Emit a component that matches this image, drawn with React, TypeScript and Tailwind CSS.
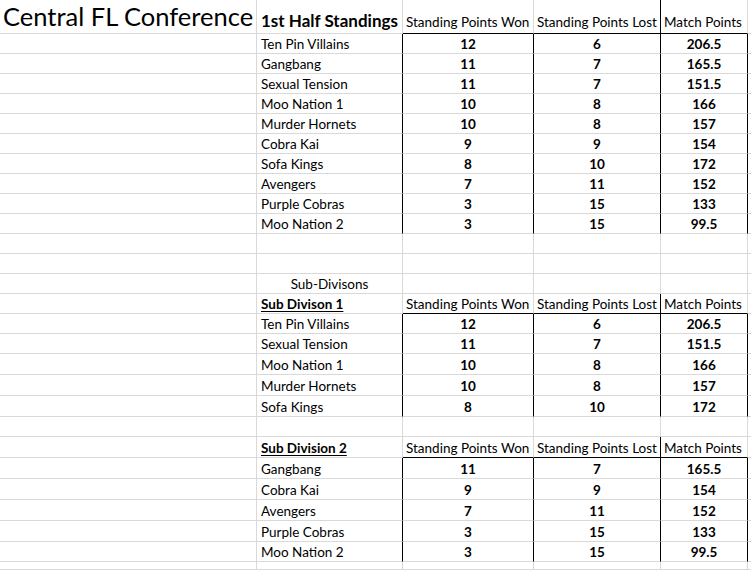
import React from "react";

type Kind = "title" | "header" | "data" | "empty" | "label";

interface RowDef {
  h: number;
  kind: Kind;
  a?: React.ReactNode;
  b?: React.ReactNode;
  c?: React.ReactNode;
  d?: React.ReactNode;
  e?: React.ReactNode;
}

const G = "border-[#d9d9d9]";

function data(name: string, w: string, l: string, m: string, h = 20): RowDef {
  return { h, kind: "data", b: name, c: w, d: l, e: m };
}

const empty = (h = 20): RowDef => ({ h, kind: "empty" });

const hdr = (title: React.ReactNode, h = 20): RowDef => ({
  h,
  kind: "header",
  b: title,
  c: "Standing Points Won",
  d: "Standing Points Lost",
  e: "Match Points",
});

const rows: RowDef[] = [
  {
    h: 34,
    kind: "title",
    a: "Central FL Conference",
    b: "1st Half Standings",
    c: "Standing Points Won",
    d: "Standing Points Lost",
    e: "Match Points",
  },
  data("Ten Pin Villains", "12", "6", "206.5"),
  data("Gangbang", "11", "7", "165.5"),
  data("Sexual Tension", "11", "7", "151.5"),
  data("Moo Nation 1", "10", "8", "166"),
  data("Murder Hornets", "10", "8", "157"),
  data("Cobra Kai", "9", "9", "154"),
  data("Sofa Kings", "8", "10", "172"),
  data("Avengers", "7", "11", "152"),
  data("Purple Cobras", "3", "15", "133"),
  data("Moo Nation 2", "3", "15", "99.5"),
  empty(),
  empty(),
  { h: 20, kind: "label", b: "Sub-Divisons" },
  hdr(<span className="font-bold underline underline-offset-2">Sub Divison 1</span>),
  data("Ten Pin Villains", "12", "6", "206.5", 20),
  data("Sexual Tension", "11", "7", "151.5", 20),
  data("Moo Nation 1", "10", "8", "166", 21),
  data("Murder Hornets", "10", "8", "157", 21),
  data("Sofa Kings", "8", "10", "172", 21),
  empty(20),
  hdr(<span className="font-bold underline underline-offset-2">Sub Division 2</span>, 21),
  data("Gangbang", "11", "7", "165.5", 21),
  data("Cobra Kai", "9", "9", "154", 21),
  data("Avengers", "7", "11", "152", 21),
  data("Purple Cobras", "3", "15", "133", 21),
  data("Moo Nation 2", "3", "15", "99.5", 20),
  empty(8),
];

function Row({ r }: { r: RowDef }) {
  const isData = r.kind === "data";
  const isHead = r.kind === "header" || r.kind === "title";
  const align = r.kind === "title" ? "items-end pb-[4px]" : "items-center pt-[3px]";

  const base = `flex ${align} border-r border-b overflow-hidden whitespace-nowrap shrink-0`;

  const blackIfData = isData ? "border-r-black" : "border-r-[#d9d9d9]";
  const dRight = isData || isHead ? "border-r-black" : "border-r-[#d9d9d9]";
  const headBottom = isHead ? "border-b-black" : "border-b-[#d9d9d9]";

  return (
    <div className="flex" style={{ height: r.h }}>
      <div className={`${base} ${G} w-[257px] pl-[3px]`}>
        {r.a && <span className="text-[25.5px] leading-none">{r.a}</span>}
      </div>
      <div
        className={`${base} ${G} ${blackIfData} w-[146px] ${
          r.kind === "label" ? "justify-center" : "pl-[4px]"
        }`}
      >
        {r.kind === "title" ? (
          <span className="text-[17px] font-bold leading-none">{r.b}</span>
        ) : (
          r.b
        )}
      </div>
      <div
        className={`${base} ${G} ${blackIfData} ${headBottom} w-[131px] ${
          isData ? "justify-center font-bold" : "pl-[3px]"
        }`}
      >
        {r.c}
      </div>
      <div
        className={`${base} ${G} ${dRight} ${headBottom} w-[127px] ${
          isData ? "justify-center font-bold" : "pl-[3px]"
        }`}
      >
        {r.d}
      </div>
      <div
        className={`${base} ${G} ${blackIfData} ${headBottom} w-[87px] ${
          isData ? "justify-center font-bold" : "pl-[3px]"
        }`}
      >
        {r.e}
      </div>
      <div className={`${base} ${G} flex-1 border-r-0`} />
    </div>
  );
}

export default function App() {
  return (
    <div
      className="w-[751px] h-[570px] overflow-hidden bg-white text-black text-[13.5px] leading-none"
      style={{ fontFamily: "Lato, 'Open Sans', sans-serif" }}
    >
      {rows.map((r, i) => (
        <Row key={i} r={r} />
      ))}
    </div>
  );
}
